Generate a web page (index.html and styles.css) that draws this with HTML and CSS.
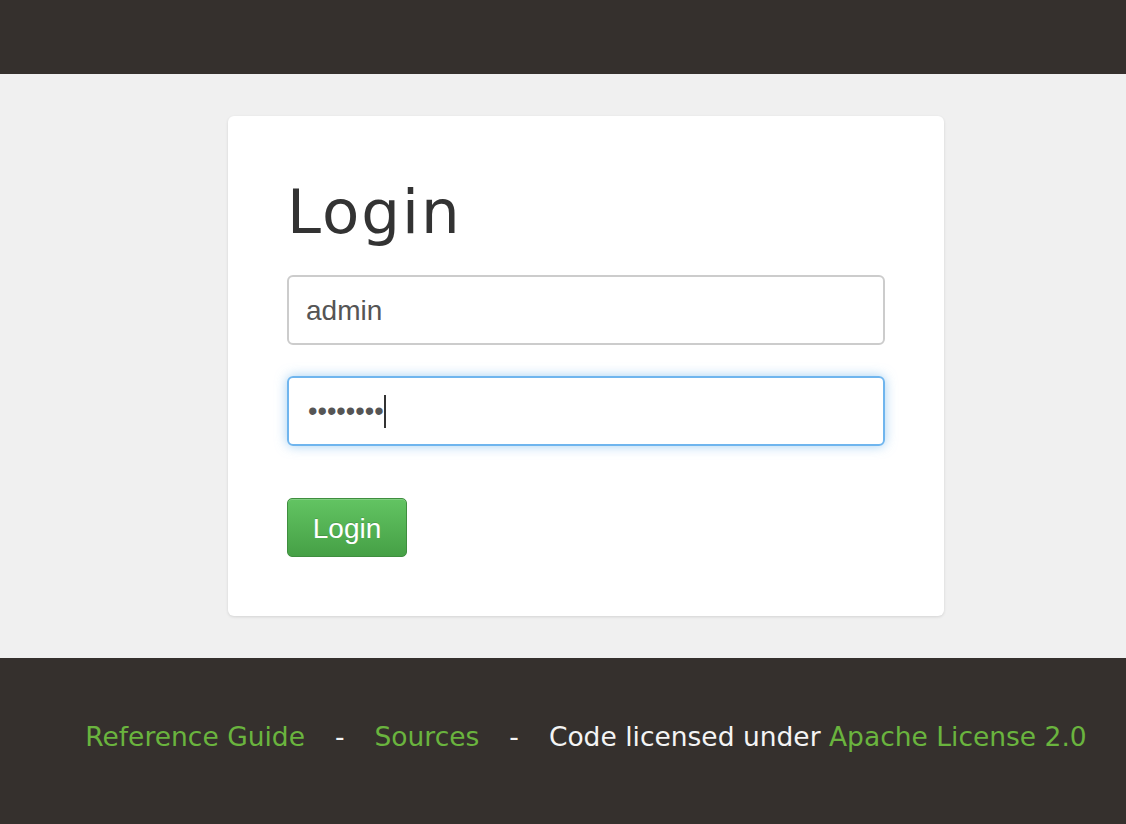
FILE: index.html
```html
<!DOCTYPE html>
<html>
<head>
<meta charset="utf-8">
<link rel="stylesheet" href="styles.css">
</head>
<body>
<header class="topbar"></header>
<main class="main">
  <div class="wrap">
    <form class="card">
      <h1 class="title">Login</h1>
      <div class="field"><div class="input">admin</div></div>
      <div class="field"><div class="input focus"><span class="dots">••••••••</span><span class="caret"></span></div></div>
      <button type="button" class="btn">Login</button>
    </form>
  </div>
</main>
<footer class="footer">
  <div class="foot-inner">
    <a class="link">Reference Guide</a>
    <span class="sep">-</span>
    <a class="link">Sources</a>
    <span class="sep">-</span>
    <span class="lic">Code licensed under <a class="link">Apache License 2.0</a></span>
  </div>
</footer>
</body>
</html>
```
FILE: styles.css
```css
html, body {
  margin: 0;
  padding: 0;
}
body {
  background: #f0f0f0;
  font-family: "DejaVu Sans", "Liberation Sans", sans-serif;
}
.topbar {
  height: 74px;
  background: #35302d;
}
.main {
  height: 584px;
  padding-top: 42px;
  box-sizing: border-box;
}
.wrap {
  display: flex;
  justify-content: center;
  padding-left: 46px;
}
.card {
  width: 716px;
  height: 500px;
  box-sizing: border-box;
  background: #fff;
  border-radius: 6px;
  box-shadow: 0 1px 3px rgba(0,0,0,0.12);
  padding: 59px;
  margin: 0;
}
.title {
  margin: 0;
  height: 100px;
  box-sizing: border-box;
  padding-top: 6px;
  font-family: "DejaVu Sans", sans-serif;
  font-weight: 400;
  font-size: 61px;
  line-height: 61px;
  letter-spacing: 2px;
  color: #333;
}
.field {
  margin-bottom: 31px;
}
.input {
  height: 70px;
  box-sizing: border-box;
  border: 2px solid #ccc;
  border-radius: 6px;
  padding: 2px 17px 0;
  font-family: "Liberation Sans", Arial, sans-serif;
  font-size: 28px;
  line-height: 64px;
  color: #555;
  display: flex;
  align-items: center;
}
.input.focus {
  border-color: #6fb5ee;
  box-shadow: 0 0 12px rgba(102,175,233,0.6);
  padding-top: 0;
}
.dots {
  font-size: 27px;
  color: #555;
  padding-left: 2px;
}
.caret {
  display: inline-block;
  width: 2px;
  height: 33px;
  background: #333;
}
.btn {
  display: block;
  margin-top: 52px;
  width: 120px;
  height: 59px;
  border: 1px solid #3f8e3f;
  border-radius: 5px;
  background: linear-gradient(to bottom, #62c462 0%, #46a046 100%);
  box-shadow: inset 0 1px 0 rgba(255,255,255,0.2);
  color: #fff;
  font-family: "Liberation Sans", Arial, sans-serif;
  font-size: 28px;
  padding: 3px 0 0;
  text-shadow: 0 -1px 0 rgba(0,0,0,0.15);
}
.footer {
  height: 166px;
  background: #35302d;
}
.foot-inner {
  display: flex;
  justify-content: center;
  align-items: center;
  padding-left: 46px;
  padding-top: 59px;
  font-size: 26.5px;
  line-height: 40px;
  color: #f4f4f4;
}
.link {
  color: #6ab43e;
  text-decoration: none;
}
.sep {
  margin: 0 30px;
}
```
